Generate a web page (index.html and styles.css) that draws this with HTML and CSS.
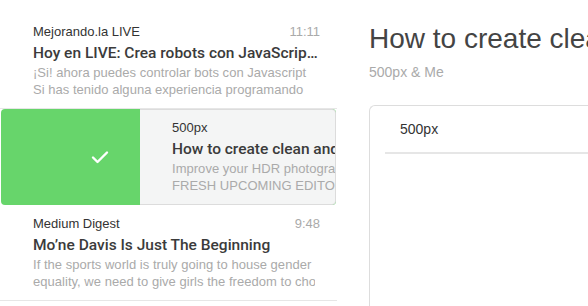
FILE: index.html
```html
<!DOCTYPE html>
<html lang="en">
<head>
  <meta charset="UTF-8" />
  <title>Inbox</title>
  <link rel="stylesheet" href="styles.css">
</head>
<body>

<div class="list">
  <!-- Message 1 -->
  <div class="item">
    <div class="item-head">
      <span class="sender">Mejorando.la LIVE</span>
      <span class="time">11:11</span>
    </div>
    <div class="subject ellipsis">Hoy en LIVE: Crea robots con JavaScript para controlar tu casa</div>
    <div class="preview">¡Si! ahora puedes controlar bots con Javascript</div>
    <div class="preview">Si has tenido alguna experiencia programando</div>
  </div>

  <!-- Swiped message -->
  <div class="swipe">
    <div class="swipe-action">
      <svg width="18" height="14" viewBox="0 0 18 14">
        <path d="M2 7.5 L6.5 12 L16 2.5" fill="none" stroke="#fff" stroke-width="2.4" stroke-linecap="round" stroke-linejoin="round"/>
      </svg>
    </div>
    <div class="swipe-card">
      <div class="item-inner">
        <div class="item-head">
          <span class="sender">500px</span>
        </div>
        <div class="subject">How to create clean and sharp HDR photos</div>
        <div class="preview">Improve your HDR photography with these tips</div>
        <div class="preview">FRESH UPCOMING EDITORS' CHOICE POPULAR</div>
      </div>
    </div>
  </div>

  <!-- Message 3 -->
  <div class="item">
    <div class="item-head">
      <span class="sender">Medium Digest</span>
      <span class="time">9:48</span>
    </div>
    <div class="subject ellipsis">Mo’ne Davis Is Just The Beginning</div>
    <div class="preview">If the sports world is truly going to house gender</div>
    <div class="preview">equality, we need to give girls the freedom to choose</div>
  </div>
</div>

<div class="detail">
  <h1>How to create clean and sharp HDR photos</h1>
  <p class="from">500px &amp; Me</p>
  <div class="thread">
    <div class="thread-head">500px</div>
  </div>
</div>

</body>
</html>
```

FILE: styles.css
```css
body {
  margin: 0;
  padding: 0;
  height: 306px;
  overflow: hidden;
  display: flex;
  font-family: "Liberation Sans", Arial, sans-serif;
  background-color: #fff;
  color: #333;
}

.list {
  width: 337px;
  flex-shrink: 0;
  padding-top: 13px;
}

.item {
  height: 96px;
  padding: 10px 17px 0 33px;
  box-sizing: border-box;
  border-bottom: 1px solid #e6e6e6;
}

.item-head {
  display: flex;
  justify-content: space-between;
  font-size: 13px;
  line-height: 18px;
}

.sender {
  color: #333;
}

.time {
  color: #aaa;
}

.subject {
  font-family: Roboto, "Liberation Sans", sans-serif;
  font-size: 15.5px;
  line-height: 22px;
  font-weight: 500;
  color: #3b3b3b;
  white-space: nowrap;
  overflow: hidden;
  margin-top: 1px;
}

.ellipsis {
  text-overflow: ellipsis;
}

.preview {
  font-size: 13px;
  line-height: 17px;
  letter-spacing: 0.03px;
  color: #aaa;
  white-space: nowrap;
  overflow: hidden;
  margin-right: 5px;
}

.swipe {
  display: flex;
  height: 96px;
  margin-left: 1px;
  margin-right: 1px;
  background-color: #67d56b;
  border-radius: 4px;
  overflow: hidden;
}

.swipe-action {
  width: 139px;
  flex-shrink: 0;
  display: flex;
  justify-content: flex-end;
  align-items: center;
  padding-right: 31px;
  box-sizing: border-box;
}

.swipe-card {
  flex: 1;
  background-color: #f4f5f5;
  border: 1px solid #dcdcdc;
  border-left: none;
  border-radius: 0 4px 4px 0;
  overflow: hidden;
}

.swipe-card .item-inner {
  width: 287px;
  padding: 9px 0 0 32px;
}

.detail {
  flex: 1;
  padding: 17px 0 0 32px;
  overflow: hidden;
}

.detail h1 {
  margin: 0;
  font-size: 28px;
  line-height: 44px;
  font-weight: normal;
  color: #444;
  white-space: nowrap;
}

.from {
  margin: 1px 0 0;
  font-size: 14px;
  line-height: 20px;
  color: #aaa;
}

.thread {
  margin-top: 23px;
  height: 300px;
  border: 1px solid #ddd;
  border-right: none;
  border-radius: 6px 0 0 0;
}

.thread-head {
  margin-left: 15px;
  padding: 13px 0 0 15px;
  height: 33px;
  font-size: 14px;
  line-height: 20px;
  color: #333;
  border-bottom: 2px solid #e6e6e6;
}
```
